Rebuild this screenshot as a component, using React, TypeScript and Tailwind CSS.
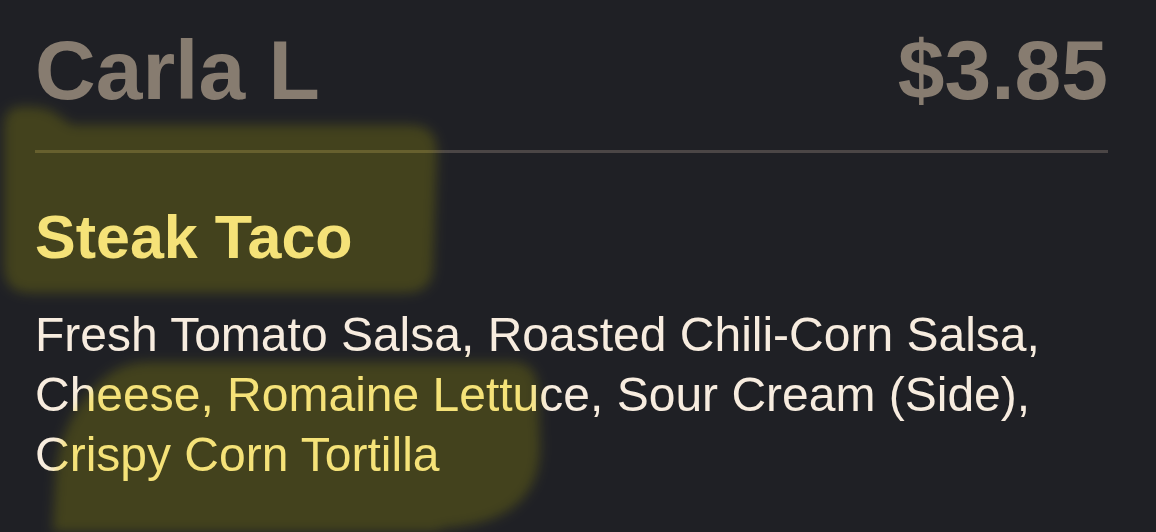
const blobOne =
  "M 20 107 Q 48 105 60 117 L 72 125 L 410 125 Q 437 125 437 152 L 433 268 Q 432 293 405 293 L 30 293 Q 4 293 4 266 L 4 128 Q 4 107 20 107 Z";
const blobTwo =
  "M 52 545 L 56 470 Q 62 418 98 384 Q 118 362 150 362 L 512 362 Q 537 362 538 390 L 540 445 Q 541 522 445 528 L 405 545 Z";

function Highlighter() {
  return (
    <>
      <svg
        className="pointer-events-none absolute left-0 top-0 mix-blend-multiply blur-[6px]"
        width={1156}
        height={532}
        viewBox="0 0 1156 532"
      >
        <path d={blobOne} fill="#fbee84" />
        <path d={blobTwo} fill="#fbee84" />
      </svg>
      <svg
        className="pointer-events-none absolute left-0 top-0 mix-blend-screen blur-[6px]"
        width={1156}
        height={532}
        viewBox="0 0 1156 532"
      >
        <path d={blobOne} fill="#29290a" />
        <path d={blobTwo} fill="#29290a" />
      </svg>
    </>
  );
}

export default function App() {
  return (
    <div
      className="relative isolate h-[532px] w-[1156px] overflow-hidden bg-[#1f2025] pl-[35px] pr-[48px] pt-[28px]"
      style={{ fontFamily: '"Liberation Sans", Arial, sans-serif' }}
    >
      <div className="flex items-baseline justify-between text-[84px] font-bold leading-none text-[#877c70]">
        <span>Carla L</span>
        <span>$3.85</span>
      </div>
      <div className="mt-[38px] h-[3px] bg-[#4b4646]" />
      <h2 className="mt-[54px] text-[61px] font-bold leading-none text-[#f7ecdf]">Steak Taco</h2>
      <p className="mt-[37px] text-[48px] leading-[60px] text-[#f7ecdf]">
        Fresh Tomato Salsa, Roasted Chili-Corn Salsa,
        <br />
        Cheese, Romaine Lettuce, Sour Cream (Side),
        <br />
        Crispy Corn Tortilla
      </p>
      <Highlighter />
    </div>
  );
}
